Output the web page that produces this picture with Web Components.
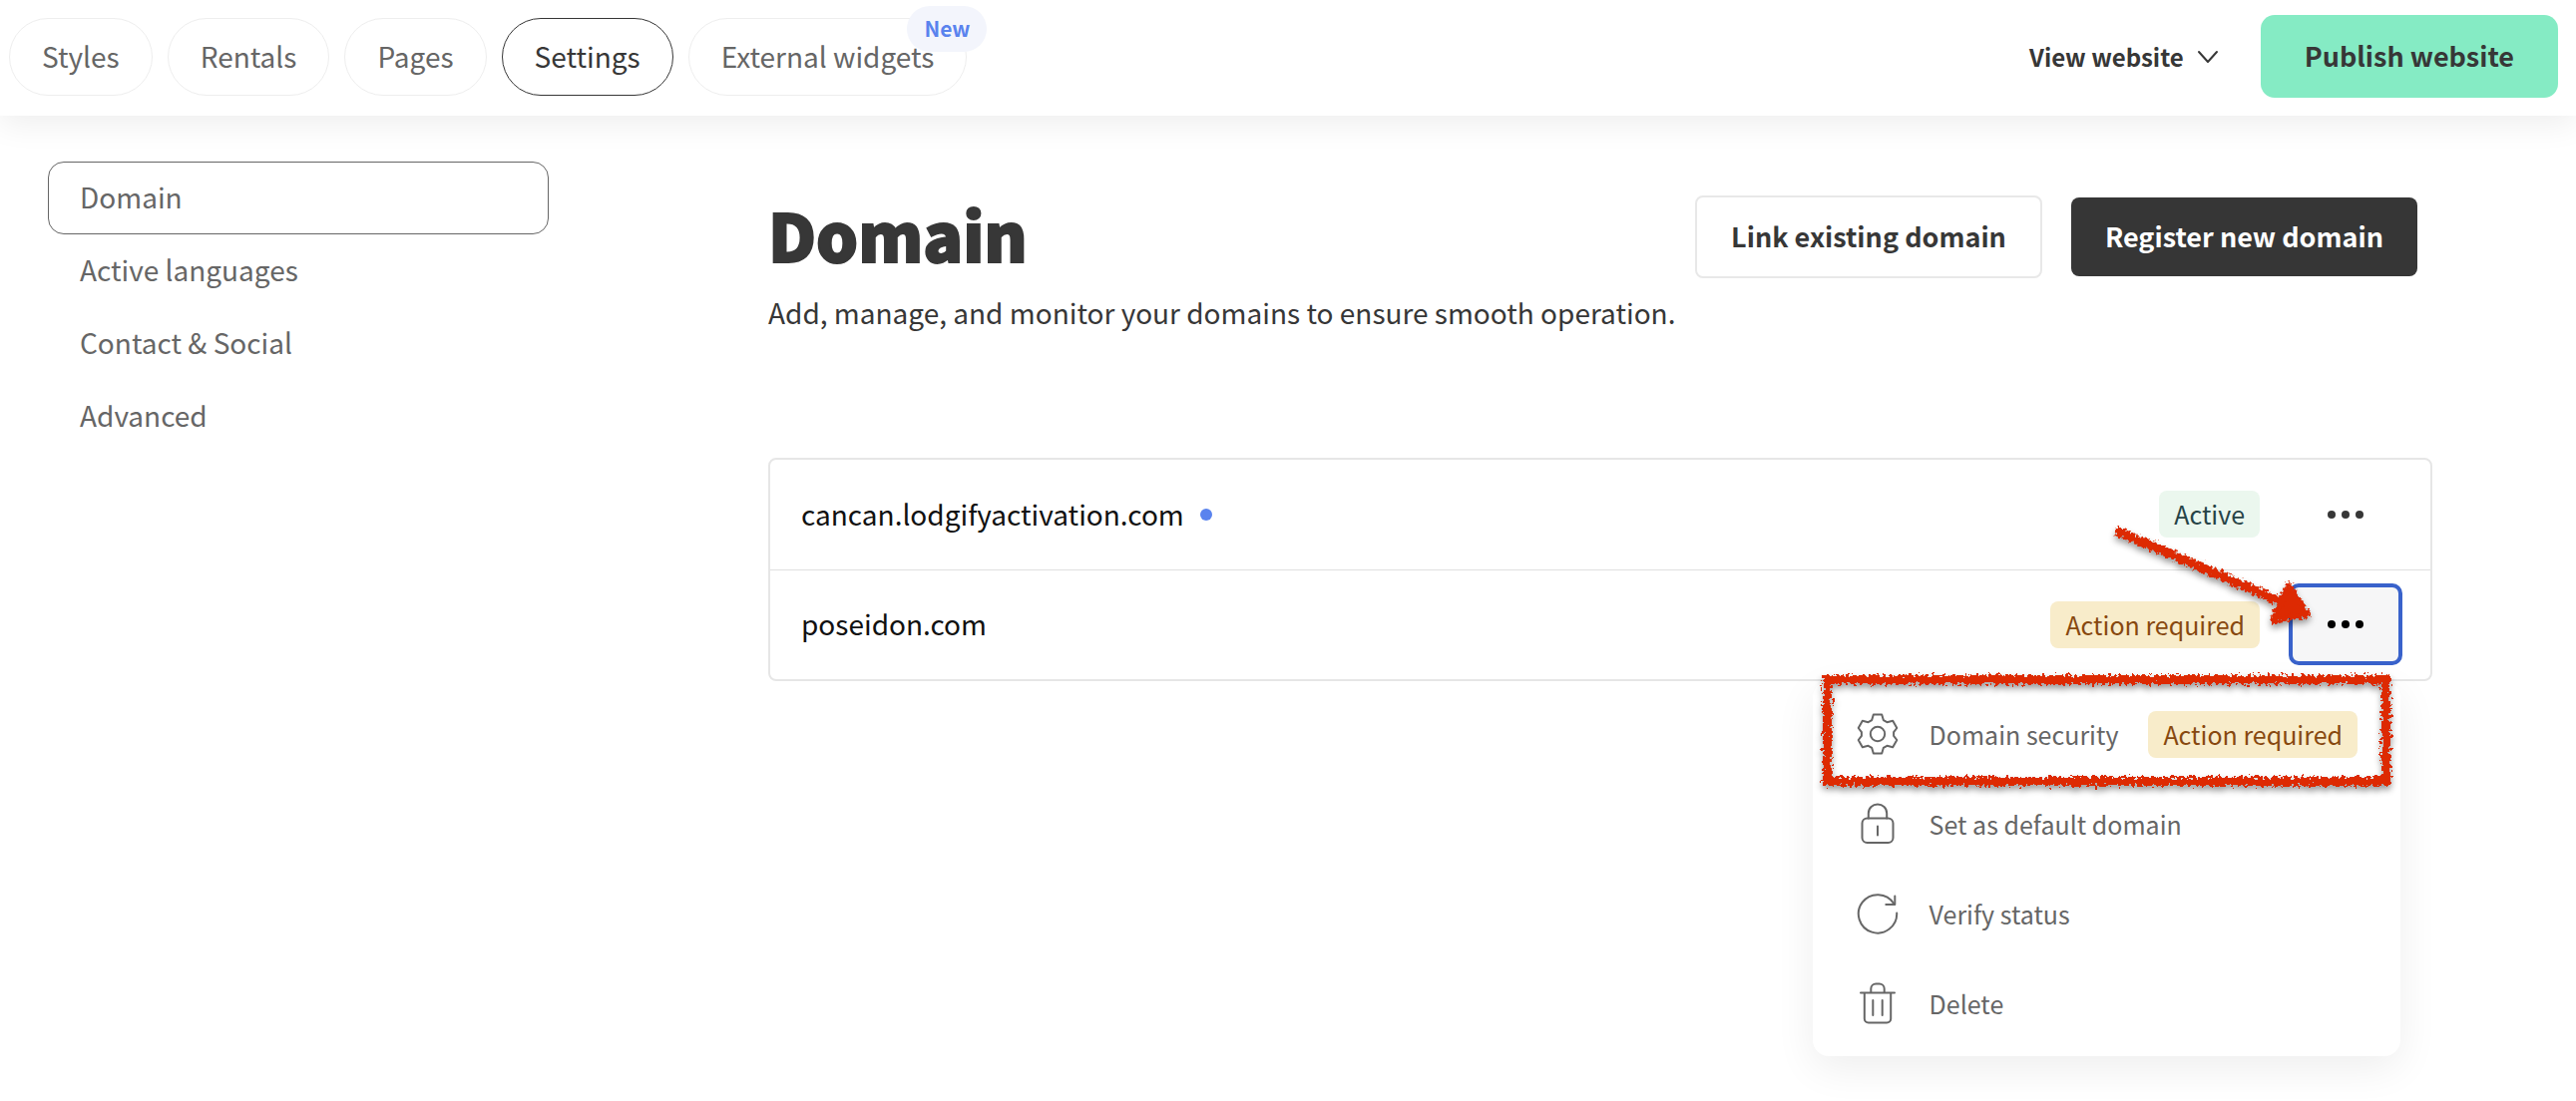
<!DOCTYPE html>
<html lang="en">
<head>
<meta charset="utf-8">
<meta name="viewport" content="width=device-width, initial-scale=1">
<title>Domain settings</title>
<style>
    body {
        margin: 0;
        min-height: 100vh;
        background: #ffffff;
        color: #373737;
        font-family: "Noto Sans CJK SC", "Noto Sans", sans-serif;
        font-size: 28px;
        line-height: 40px;
    }
</style>
</head>
<body>
<settings-page></settings-page>

<script>
// Base class: puts the markup of the element in an open shadow root
class BaseElement extends HTMLElement {
    constructor() {
        super();
        this.attachShadow({ mode: 'open' });
    }

    connectedCallback() {
        this.shadowRoot.innerHTML = `
            <style>*, *::before { box-sizing: border-box; }</style>
            ${this.render()}
        `;
    }
}

const ICONS = {
    gear: '<path d="M17.8 2.5h8.4l1.6 5.6 3.6 2.1 5.8-1.5 4.1 7.3-3.2 4.2v3.6l3.2 4.2-4.1 7.3-5.8-1.5-3.6 2.1-1.6 5.6h-8.4l-1.6-5.6-3.6-2.1-5.8 1.5L2.7 28l3.2-4.2v-3.6L2.7 16l4.1-7.3 5.8 1.5 3.6-2.1z"/><circle cx="22" cy="22" r="7.2"/>',
    lock: '<rect x="6.5" y="16.5" width="31" height="24.5" rx="5"/><path d="M12.8 16.5v-5C12.8 6 17 2.5 22 2.5s9.2 3.5 9.2 9v5M22 24.5v9"/>',
    refresh: '<path d="M41.2 21.5A19.2 19.2 0 1 1 38.2 12"/><path d="M39.3 4.5v8.5h-9"/>',
    trash: '<path d="M5 11.5h34M8.8 11.5v26a4 4 0 0 0 4 4h18.4a4 4 0 0 0 4-4v-26M15.3 11.5V7.500a5 5 0 0 1 5-5h3.400a5 5 0 0 1 5 5v4M17.300 19v15M26.700 19v15"/>'
};

class LineIcon extends BaseElement {
    render() {
        return `
            <style>
                :host {
                    display: block;
                    width: 44px;
                    height: 44px;
                }

                svg {
                    display: block;
                    fill: none;
                    stroke: #666666;
                    stroke-width: 2;
                    stroke-linecap: round;
                    stroke-linejoin: round;
                }
            </style>
            <svg viewBox="0 0 44 44" width="44" height="44" aria-hidden="true">${ICONS[this.getAttribute('name')]}</svg>
        `;
    }
}

class StatusBadge extends BaseElement {
    render() {
        return `
            <style>
                :host {
                    display: inline-block;
                    padding: 3px 15px 4px;
                    border-radius: 8px;
                    background: #f8ecca;
                    color: #87480f;
                    font-size: 25px;
                    line-height: 40px;
                    white-space: nowrap;
                }

                :host([type="active"]) {
                    background: #ebf7ee;
                    color: #264347;
                }
            </style>
            <slot></slot>
        `;
    }
}

class NavTab extends BaseElement {
    render() {
        const badge = this.getAttribute('badge');
        return `
            <style>
                :host {
                    display: block;
                    position: relative;
                }

                a {
                    display: block;
                    padding: 17px 32px 19px;
                    border: 1px solid #eeeeee;
                    border-radius: 39px;
                    color: #666666;
                    text-decoration: none;
                    white-space: nowrap;
                }

                :host([active]) a {
                    border-color: #373737;
                    color: #373737;
                }

                .badge {
                    position: absolute;
                    top: -12px;
                    right: -20px;
                    padding: 3px 17px 5px;
                    border-radius: 24px;
                    background: #f3f5fc;
                    color: #5a83ee;
                    font-size: 21px;
                    font-weight: 700;
                    line-height: 38px;
                }
            </style>
            <a href="#"><slot></slot></a>
            ${badge ? `<span class="badge">${badge}</span>` : ''}
        `;
    }
}

class ActionButton extends BaseElement {
    render() {
        return `
            <style>
                :host {
                    display: block;
                }

                button {
                    display: block;
                    padding: 19px 34px 20px;
                    border: 0;
                    border-radius: 8px;
                    font: inherit;
                    font-size: 27px;
                    font-weight: 700;
                    color: #373737;
                    white-space: nowrap;
                    cursor: pointer;
                }

                :host([type="publish"]) button {
                    padding: 21px 44px 22px;
                    border-radius: 14px;
                    background: #85ebc4;
                }

                :host([type="outline"]) button {
                    border: 2px solid #e8e8e8;
                    background: #ffffff;
                }

                :host([type="dark"]) button {
                    background: #363636;
                    color: #ffffff;
                }
            </style>
            <button type="button"><slot></slot></button>
        `;
    }
}

class TopBar extends BaseElement {
    render() {
        return `
            <style>
                :host {
                    display: flex;
                    align-items: center;
                    justify-content: space-between;
                    height: 116px;
                    padding: 0 18px 3px 9px;
                    box-shadow: 0 8px 30px rgba(0, 0, 0, 0.07);
                }

                nav {
                    display: flex;
                    gap: 15px;
                }

                .actions {
                    display: flex;
                    align-items: center;
                    gap: 42px;
                }

                .view {
                    display: flex;
                    align-items: center;
                    gap: 13px;
                    padding: 0;
                    border: 0;
                    background: none;
                    color: #373737;
                    font: inherit;
                    font-size: 24px;
                    font-weight: 700;
                    white-space: nowrap;
                }

                .view svg {
                    fill: none;
                    stroke: #373737;
                    stroke-width: 2;
                    stroke-linecap: round;
                    stroke-linejoin: round;
                }
            </style>
            <nav>
                <nav-tab>Styles</nav-tab>
                <nav-tab>Rentals</nav-tab>
                <nav-tab>Pages</nav-tab>
                <nav-tab active>Settings</nav-tab>
                <nav-tab badge="New">External widgets</nav-tab>
            </nav>
            <div class="actions">
                <button class="view" type="button">
                    View website
                    <svg viewBox="0 0 22 14" width="22" height="14" aria-hidden="true"><path d="M2 2l9 10 9-10"/></svg>
                </button>
                <action-button type="publish">Publish website</action-button>
            </div>
        `;
    }
}

class SideMenu extends BaseElement {
    render() {
        return `
            <style>
                :host {
                    display: block;
                }

                a {
                    display: block;
                    padding: 15px 31px 17px;
                    border: 1px solid transparent;
                    border-radius: 16px;
                    color: #666666;
                    line-height: 39px;
                    text-decoration: none;
                }

                a[aria-current] {
                    border-color: #666666;
                }
            </style>
            <nav>
                <a href="#" aria-current="page">Domain</a>
                <a href="#">Active languages</a>
                <a href="#">Contact &amp; Social</a>
                <a href="#">Advanced</a>
            </nav>
        `;
    }
}

class RowMenu extends BaseElement {
    render() {
        return `
            <style>
                :host {
                    display: block;
                    padding: 8px 0;
                    border-radius: 16px;
                    background: #ffffff;
                    box-shadow: 0 12px 40px rgba(0, 0, 0, 0.07);
                }

                ul {
                    margin: 0;
                    padding: 0;
                    list-style: none;
                }

                li {
                    position: relative;
                }

                button {
                    display: flex;
                    align-items: center;
                    gap: 30px;
                    width: 100%;
                    height: 90px;
                    padding: 0 43px;
                    border: 0;
                    background: none;
                    color: #666666;
                    font: inherit;
                    font-size: 25px;
                    white-space: nowrap;
                }

                /* hand drawn frame round the first item */
                .frame {
                    position: absolute;
                    inset: -14px 10px -7px 10px;
                    border: 9px solid #dd2a02;
                    filter: url(#crayon);
                    pointer-events: none;
                }

                .defs {
                    position: absolute;
                }
            </style>
            <svg class="defs" width="0" height="0" aria-hidden="true">
                <filter id="crayon" x="-5%" y="-20%" width="110%" height="140%" color-interpolation-filters="sRGB">
                    <feTurbulence type="fractalNoise" baseFrequency="0.3" numOctaves="2" seed="4" result="noise"/>
                    <feDisplacementMap in="SourceGraphic" in2="noise" scale="11" xChannelSelector="R" yChannelSelector="G"/>
                    <feDropShadow dx="0" dy="4" stdDeviation="3" flood-color="#000000" flood-opacity="0.4"/>
                </filter>
            </svg>
            <ul>
                <li>
                    <button type="button"><line-icon name="gear"></line-icon>Domain security<status-badge>Action required</status-badge></button>
                    <div class="frame"></div>
                </li>
                <li><button type="button"><line-icon name="lock"></line-icon>Set as default domain</button></li>
                <li><button type="button"><line-icon name="refresh"></line-icon>Verify status</button></li>
                <li><button type="button"><line-icon name="trash"></line-icon>Delete</button></li>
            </ul>
        `;
    }
}

class MoreButton extends BaseElement {
    render() {
        const open = this.hasAttribute('open');
        return `
            <style>
                :host {
                    display: block;
                    position: relative;
                }

                button {
                    display: flex;
                    align-items: center;
                    justify-content: center;
                    width: 114px;
                    height: 82px;
                    border: 4px solid transparent;
                    border-radius: 10px;
                    background: none;
                    color: #373737;
                }

                :host([open]) button {
                    border-color: #3962cb;
                    background: #f6f6f7;
                    color: #000000;
                }

                row-menu {
                    position: absolute;
                    top: 98px;
                    right: 2px;
                }

                .arrow {
                    position: absolute;
                    top: -65px;
                    left: -184px;
                    pointer-events: none;
                }
            </style>
            <button type="button" aria-label="More actions" aria-expanded="${open}">
                <svg viewBox="0 0 36 8" width="36" height="8" fill="currentColor" aria-hidden="true">
                    <circle cx="4" cy="4" r="4"/><circle cx="18" cy="4" r="4"/><circle cx="32" cy="4" r="4"/>
                </svg>
            </button>
            ${open ? `
                <row-menu></row-menu>
                <svg class="arrow" viewBox="0 0 220 125" width="220" height="125" aria-hidden="true">
                    <filter id="crayon" x="-10%" y="-20%" width="120%" height="140%" color-interpolation-filters="sRGB">
                        <feTurbulence type="fractalNoise" baseFrequency="0.3" numOctaves="2" seed="7" result="noise"/>
                        <feDisplacementMap in="SourceGraphic" in2="noise" scale="9" xChannelSelector="R" yChannelSelector="G"/>
                        <feDropShadow dx="0" dy="4" stdDeviation="3" flood-color="#000000" flood-opacity="0.4"/>
                    </filter>
                    <g filter="url(#crayon)" fill="#dd2a02" stroke="#dd2a02" stroke-linejoin="round">
                        <path d="M11 12L180 85" stroke-width="9"/>
                        <path d="M184 67L203 96L168 102Z" stroke-width="6"/>
                    </g>
                </svg>
            ` : ''}
        `;
    }
}

class DomainTable extends BaseElement {
    render() {
        return `
            <style>
                :host {
                    display: block;
                    border: 2px solid #e6e6e6;
                    border-radius: 8px;
                }

                table {
                    width: 100%;
                    border-collapse: collapse;
                }

                td {
                    height: 110px;
                    padding: 0;
                }

                tr + tr td {
                    border-top: 1px solid #e0e0e0;
                }

                .name {
                    padding: 0 0 2px 31px;
                    color: #111111;
                }

                .name span {
                    display: inline-block;
                    width: 12px;
                    height: 12px;
                    margin-left: 16px;
                    border-radius: 50%;
                    background: #5a83ee;
                    vertical-align: 5px;
                }

                .status {
                    text-align: right;
                }

                .more {
                    width: 171px;
                    padding: 0 28px 0 29px;
                }
            </style>
            <table>
                <tr>
                    <td class="name">cancan.lodgifyactivation.com<span></span></td>
                    <td class="status"><status-badge type="active">Active</status-badge></td>
                    <td class="more"><more-button></more-button></td>
                </tr>
                <tr>
                    <td class="name">poseidon.com</td>
                    <td class="status"><status-badge>Action required</status-badge></td>
                    <td class="more"><more-button open></more-button></td>
                </tr>
            </table>
        `;
    }
}

class SettingsPage extends BaseElement {
    render() {
        return `
            <style>
                :host {
                    display: block;
                    min-height: 100vh;
                }

                .layout {
                    display: grid;
                    grid-template-columns: 502px 1fr;
                    gap: 220px;
                    padding: 46px 144px 40px 48px;
                }

                main {
                    padding-top: 33px;
                }

                header {
                    display: flex;
                    align-items: center;
                    justify-content: space-between;
                    padding-right: 15px;
                }

                h1 {
                    margin: 0;
                    padding-bottom: 6px;
                    font-size: 66px;
                    font-weight: 900;
                    line-height: 78px;
                    -webkit-text-stroke: 2px currentColor;
                }

                .buttons {
                    display: flex;
                    align-items: center;
                    gap: 29px;
                }

                p {
                    margin: 14px 0 126px;
                }
            </style>
            <top-bar></top-bar>
            <div class="layout">
                <side-menu></side-menu>
                <main>
                    <header>
                        <h1>Domain</h1>
                        <div class="buttons">
                            <action-button type="outline">Link existing domain</action-button>
                            <action-button type="dark">Register new domain</action-button>
                        </div>
                    </header>
                    <p>Add, manage, and monitor your domains to ensure smooth operation.</p>
                    <domain-table></domain-table>
                </main>
            </div>
        `;
    }
}

// Register the custom elements
customElements.define('line-icon', LineIcon);
customElements.define('status-badge', StatusBadge);
customElements.define('nav-tab', NavTab);
customElements.define('action-button', ActionButton);
customElements.define('top-bar', TopBar);
customElements.define('side-menu', SideMenu);
customElements.define('row-menu', RowMenu);
customElements.define('more-button', MoreButton);
customElements.define('domain-table', DomainTable);
customElements.define('settings-page', SettingsPage);
</script>
</body>
</html>
